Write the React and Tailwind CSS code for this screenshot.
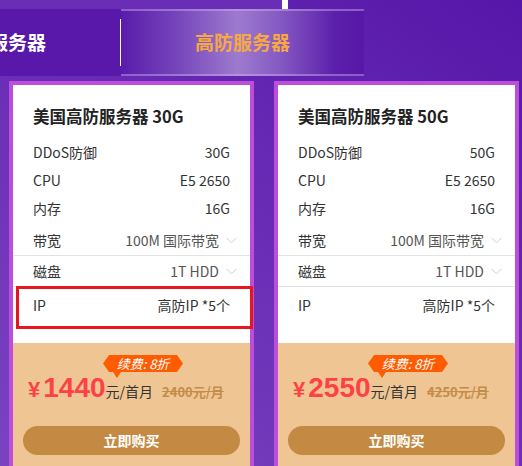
import React from "react";

const cards = [
  { name: "美国高防服务器 30G", ddos: "30G", price: "1440", old: "2400元/月", marked: true },
  { name: "美国高防服务器 50G", ddos: "50G", price: "2550", old: "4250元/月", marked: false },
];

function Chevron() {
  return (
    <svg width="11" height="7" viewBox="0 0 11 7" className="ml-[7px]">
      <polyline points="0.5,0.8 5.5,5.8 10.5,0.8" fill="none" stroke="#cfcfcf" strokeWidth="1" />
    </svg>
  );
}

function PlanCard({ card }) {
  return (
    <div className="shrink-0 w-[245px] h-[389px] border-4 border-[#bd4edc] bg-white flex flex-col">
      <div className="pt-[19px] px-5 text-[16.5px] leading-[24px] font-bold text-[#222]">{card.name}</div>
      <div className="mt-[10px] text-[14px] text-[#333]">
        <div className="h-[28px] px-5 flex items-center justify-between">
          <span>DDoS防御</span>
          <span>{card.ddos}</span>
        </div>
        <div className="h-[28px] px-5 flex items-center justify-between">
          <span>CPU</span>
          <span>E5 2650</span>
        </div>
        <div className="h-[28px] px-5 flex items-center justify-between">
          <span>内存</span>
          <span>16G</span>
        </div>
        <div className="h-[34px] pt-[4px] pl-5 pr-[13px] flex items-center justify-between border-b border-[#e3e3e3]">
          <span>带宽</span>
          <span className="flex items-center text-[#555]">
            100M 国际带宽
            <Chevron />
          </span>
        </div>
        <div className="h-[31px] pl-5 pr-[13px] flex items-center justify-between border-b border-[#e3e3e3]">
          <span>磁盘</span>
          <span className="flex items-center text-[#555]">
            1T HDD
            <Chevron />
          </span>
        </div>
        {card.marked ? (
          <div className="-mt-px ml-[3px] -mr-[3px] h-[43px] border-[3px] border-[#e8151f] pl-[14px] pr-5 pt-[6px] flex justify-between">
            <span className="leading-[20px]">IP</span>
            <span className="leading-[20px]">高防IP *5个</span>
          </div>
        ) : (
          <div className="h-[42px] px-5 pt-[8px] flex justify-between">
            <span className="leading-[20px]">IP</span>
            <span className="leading-[20px]">高防IP *5个</span>
          </div>
        )}
      </div>
      <div className="mt-auto h-[123px] bg-[#efc693] flex flex-col pt-[12px]">
        <div className="relative ml-[90px] w-[80px] h-[17px]">
          <div className="h-full bg-[#ff5b00] flex items-center justify-center text-white italic text-[13px] leading-none [clip-path:polygon(6px_0,calc(100%-6px)_0,100%_50%,calc(100%-6px)_100%,6px_100%,0_50%)]">
            续费: 8折
          </div>
          <div className="absolute left-[10px] top-[17px] w-0 h-0 border-l-[4px] border-r-[4px] border-t-[6px] border-l-transparent border-r-transparent border-t-[#ff5b00]" />
        </div>
        <div className="mt-[2px] pl-[15px] flex items-baseline leading-[28px]">
          <span className="font-['Liberation_Sans',sans-serif] font-bold text-[22px] text-[#fd4247] mr-[3px]">¥</span>
          <span className="font-['Liberation_Sans',sans-serif] font-bold text-[28px] text-[#fd4247]">{card.price}</span>
          <span className="text-[14px] text-[#333]">元/首月</span>
          <span className="ml-[9px] text-[13px] font-bold text-[#c48c4a] line-through">{card.old}</span>
        </div>
        <button className="mt-[20px] mx-[10px] h-[29px] rounded-full bg-[#c48a44] text-white font-bold text-[14px]">
          立即购买
        </button>
      </div>
    </div>
  );
}

export default function App() {
  return (
    <div className="w-[522px] h-[466px] overflow-hidden bg-[linear-gradient(215deg,#5616a9_0%,#6427b2_35%,#7a43c0_100%)] font-['Noto_Sans_CJK_SC','Noto_Sans',sans-serif]">
      <div className="h-[9px] flex">
        <div className="w-[282px] bg-[#6a2db5]" />
        <div className="w-[6px] bg-white" />
      </div>
      <div className="flex h-[67px] w-[364px]">
        <div className="w-[120px] bg-[#5a18ab] overflow-hidden flex items-center justify-end pr-[74px]">
          <span className="whitespace-nowrap text-white font-bold text-[19px]">云服务器</span>
        </div>
        <div className="w-px bg-[#5a18ab] py-[10px]">
          <div className="h-full bg-white" />
        </div>
        <div className="w-[243px] border-y-[2px] border-[rgba(205,180,240,0.45)] bg-[linear-gradient(90deg,#5a1bab_0%,#7443ba_22%,#9e7ace_48%,#8458c2_66%,#5c1fab_88%,#5717a8_100%)] flex items-center justify-center">
          <span className="text-[#f6a843] font-bold text-[19px]">高防服务器</span>
        </div>
      </div>
      <div className="mt-[5px] pl-[9px] flex gap-5">
        {cards.map((c) => (
          <PlanCard key={c.name} card={c} />
        ))}
      </div>
    </div>
  );
}
